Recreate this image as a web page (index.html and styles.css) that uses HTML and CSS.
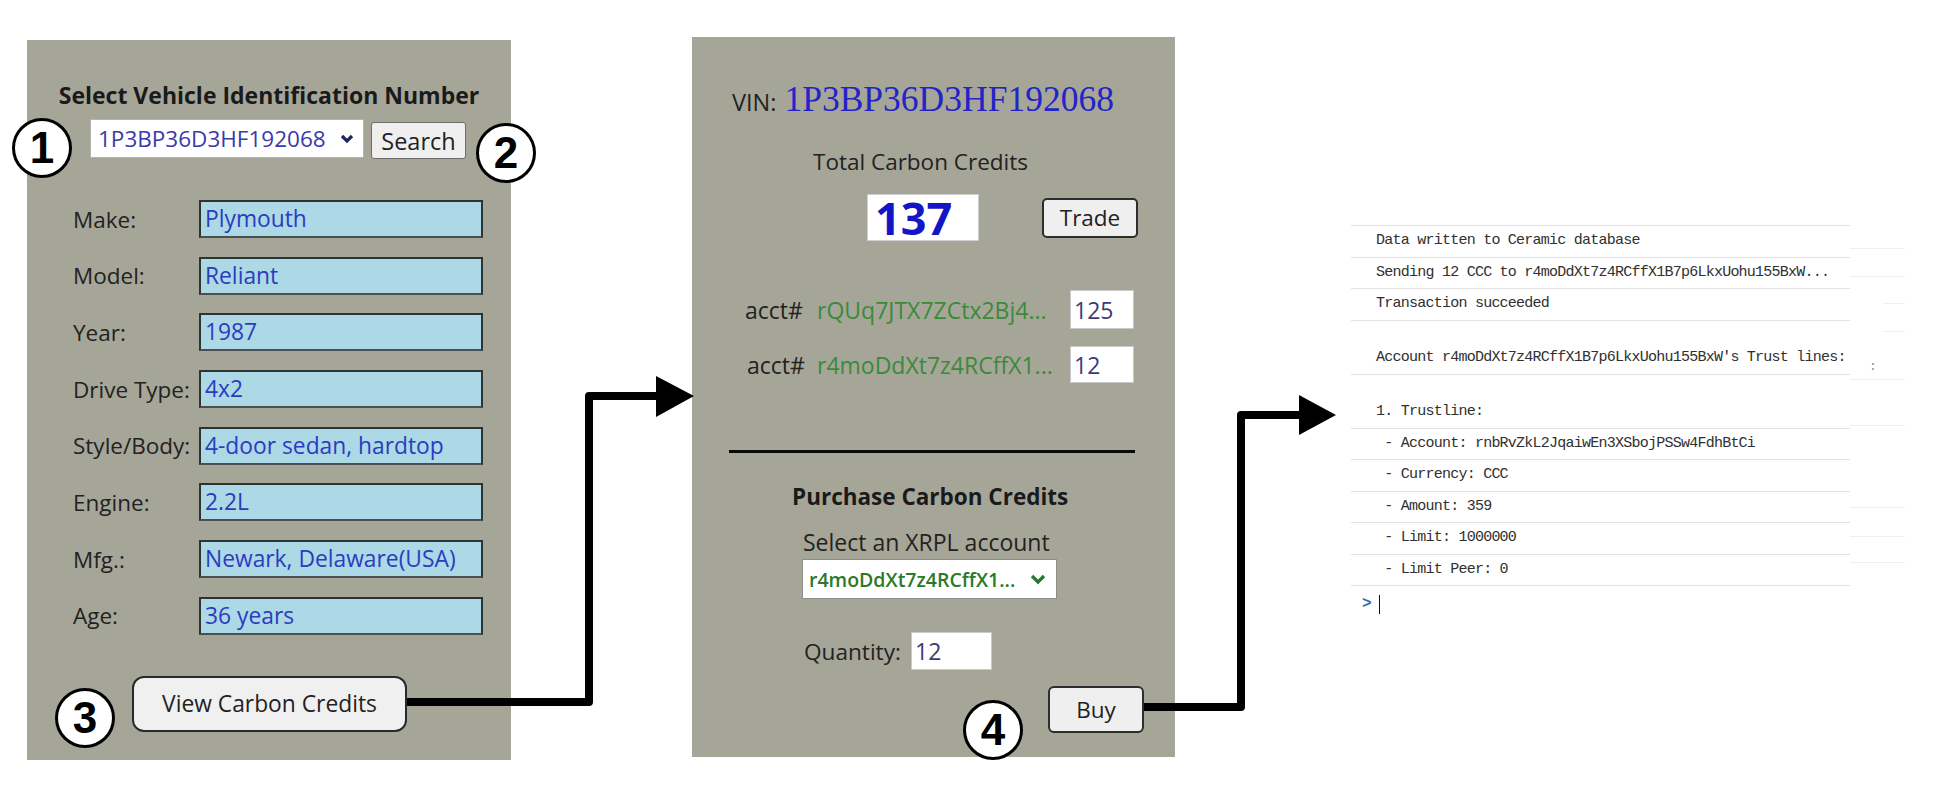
FILE: index.html
```html
<!DOCTYPE html>
<html>
<head>
<meta charset="utf-8">
<title>Carbon Credits Flow</title>
<link rel="stylesheet" href="styles.css">
</head>
<body>
<div class="page">
  <section class="panel vehicle">
    <h2 class="v-title">Select Vehicle Identification Number</h2>
    <div class="search-row">
      <div class="select vin-select">
        <span>1P3BP36D3HF192068</span>
        <svg class="chev" width="14" height="9" viewBox="0 0 14 9"><path d="M2 2 L7 7 L12 2" fill="none" stroke="#1c2560" stroke-width="3.2"/></svg>
      </div>
      <button class="btn search-btn">Search</button>
    </div>
    <div class="fields">
      <div class="field"><span class="label">Make:</span><span class="box">Plymouth</span></div>
      <div class="field"><span class="label">Model:</span><span class="box">Reliant</span></div>
      <div class="field"><span class="label">Year:</span><span class="box">1987</span></div>
      <div class="field"><span class="label">Drive Type:</span><span class="box">4x2</span></div>
      <div class="field"><span class="label">Style/Body:</span><span class="box">4-door sedan, hardtop</span></div>
      <div class="field"><span class="label">Engine:</span><span class="box">2.2L</span></div>
      <div class="field"><span class="label">Mfg.:</span><span class="box">Newark, Delaware(USA)</span></div>
      <div class="field"><span class="label">Age:</span><span class="box">36 years</span></div>
    </div>
    <button class="btn view-btn">View Carbon Credits</button>
  </section>

  <section class="panel credits">
    <div class="vin-row"><span class="vin-label">VIN:</span><span class="vin-value">1P3BP36D3HF192068</span></div>
    <div class="total-label">Total Carbon Credits</div>
    <div class="total-row">
      <div class="total-box">137</div>
      <button class="btn trade-btn">Trade</button>
    </div>
    <div class="acct-row first">
      <span class="acct-label">acct#</span>
      <span class="acct-id">rQUq7JTX7ZCtx2Bj4...</span>
      <span class="num-input">125</span>
    </div>
    <div class="acct-row second">
      <span class="acct-label">acct#</span>
      <span class="acct-id">r4moDdXt7z4RCffX1...</span>
      <span class="num-input">12</span>
    </div>
    <div class="rule"></div>
    <h3 class="purchase-title">Purchase Carbon Credits</h3>
    <div class="xrpl-label">Select an XRPL account</div>
    <div class="select xrpl-select">
      <span>r4moDdXt7z4RCffX1...</span>
      <svg class="chev" width="16" height="10" viewBox="0 0 16 10"><path d="M2 2 L8 8 L14 2" fill="none" stroke="#2a7a2a" stroke-width="3.4"/></svg>
    </div>
    <div class="qty-row">
      <span class="qty-label">Quantity:</span>
      <span class="qty-input">12</span>
    </div>
    <button class="btn buy-btn">Buy</button>
  </section>

  <section class="console">
    <div class="log">Data written to Ceramic database</div>
    <div class="log">Sending 12 CCC to r4moDdXt7z4RCffX1B7p6LkxUohu155BxW...</div>
    <div class="log">Transaction succeeded</div>
    <div class="log">&nbsp;<br>Account r4moDdXt7z4RCffX1B7p6LkxUohu155BxW's Trust lines:</div>
    <div class="log">&nbsp;<br>1. Trustline:</div>
    <div class="log"> - Account: rnbRvZkL2JqaiwEn3XSbojPSSw4FdhBtCi</div>
    <div class="log"> - Currency: CCC</div>
    <div class="log"> - Amount: 359</div>
    <div class="log"> - Limit: 1000000</div>
    <div class="log"> - Limit Peer: 0</div>
    <div class="prompt"><span class="caret">&gt;</span><span class="cursor"></span></div>
  </section>

  <div class="ghost">
    <div class="gl" style="margin-top:248px"></div>
    <div class="gl" style="margin-top:27px"></div>
    <div class="gl short" style="margin-top:26px"></div>
    <div class="gl short" style="margin-top:27px"></div>
    <div class="gdots" style="margin-top:29px">:</div>
    <div class="gl" style="margin-top:6px"></div>
    <div class="gl" style="margin-top:45px"></div>
    <div class="gl" style="margin-top:81px"></div>
    <div class="gl" style="margin-top:28px"></div>
    <div class="gl" style="margin-top:25px"></div>
  </div>

  <svg class="arrows" width="1958" height="802" viewBox="0 0 1958 802">
    <polyline points="407,702 589,702 589,396 660,396" fill="none" stroke="#000" stroke-width="8" stroke-linejoin="round"/>
    <polygon points="656,376 694,396 656,417" fill="#000"/>
    <polyline points="1144,707 1241,707 1241,415 1302,415" fill="none" stroke="#000" stroke-width="8" stroke-linejoin="round"/>
    <polygon points="1299,395 1336,415 1299,435" fill="#000"/>
  </svg>

  <div class="step s1">1</div>
  <div class="step s2">2</div>
  <div class="step s3">3</div>
  <div class="step s4">4</div>
</div>
</body>
</html>
```

FILE: styles.css
```css
* { box-sizing: border-box; }
html, body { margin: 0; padding: 0; background: #ffffff; }
body { font-family: "Open Sans", "Noto Sans", sans-serif; color: #222; }

.page {
  position: relative;
  width: 1958px;
  height: 802px;
  display: flex;
  align-items: flex-start;
  overflow: hidden;
}

.panel {
  background: #a6a698;
  display: flex;
  flex-direction: column;
  align-items: flex-start;
}

/* ---------- left panel ---------- */
.vehicle {
  margin-left: 27px;
  margin-top: 40px;
  width: 484px;
  height: 720px;
  padding-top: 41px;
}
.v-title {
  margin: 0;
  width: 100%;
  text-align: center;
  font-size: 23px;
  line-height: 28px;
  font-weight: 700;
  color: #1a1a1a;
}
.search-row {
  display: flex;
  align-items: flex-start;
  margin-top: 10px;
  margin-left: 63px;
}
.select {
  display: flex;
  align-items: center;
  justify-content: space-between;
  background: #fff;
  border: 1px solid #b5b5ad;
}
.vin-select {
  width: 274px;
  height: 39px;
  padding: 0 9px 0 7px;
  font-size: 22.5px;
  color: #3a3aa8;
}
.btn {
  font-family: "Open Sans", "Noto Sans", sans-serif;
  background: #efefef;
  color: #222;
  padding: 0;
  cursor: pointer;
}
.search-btn {
  width: 95px;
  height: 37px;
  margin-top: 3px;
  margin-left: 7px;
  font-size: 23.5px;
  border: 1px solid #6c6c6c;
  border-radius: 3px;
}
.fields {
  display: flex;
  flex-direction: column;
  gap: 18.7px;
  margin-top: 41px;
  margin-left: 46px;
}
.field {
  display: flex;
  align-items: center;
  height: 38px;
}
.label {
  width: 126px;
  font-size: 22.5px;
  color: #222;
}
.box {
  width: 284px;
  height: 38px;
  background: #add8e6;
  border: 2px solid #2e3434;
  border-bottom-color: #4a5050;
  padding-left: 4px;
  font-size: 22.8px;
  line-height: 33px;
  color: #2b3cc0;
}
.view-btn {
  margin-top: 41px;
  margin-left: 105px;
  width: 275px;
  height: 56px;
  font-size: 22.8px;
  border: 2px solid #2a2a2a;
  border-radius: 12px;
  background: #f0f0f0;
}

/* ---------- middle panel ---------- */
.credits {
  margin-left: 181px;
  margin-top: 37px;
  width: 483px;
  height: 720px;
  padding-top: 41px;
}
.vin-row {
  margin-left: 40px;
  height: 40px;
  display: flex;
  align-items: baseline;
  gap: 8px;
}
.vin-label { font-size: 23.5px; color: #222; }
.vin-value {
  font-family: "Liberation Serif", "Times New Roman", serif;
  font-size: 35.5px;
  color: #2323c8;
}
.total-label {
  margin-top: 29px;
  margin-left: 121px;
  font-size: 22.5px;
  line-height: 30px;
  color: #222;
}
.total-row {
  margin-top: 17px;
  margin-left: 175px;
  display: flex;
  align-items: center;
}
.total-box {
  width: 112px;
  height: 47px;
  background: #fff;
  border: 1px solid #cfcfcf;
  padding-left: 7px;
  font-weight: 700;
  font-size: 45px;
  line-height: 45px;
  color: #1515c8;
}
.trade-btn {
  margin-left: 63px;
  width: 96px;
  height: 40px;
  font-size: 22.5px;
  border: 2px solid #2d2d2d;
  border-radius: 5px;
}
.acct-row {
  display: flex;
  align-items: center;
  margin-left: 53px;
  font-size: 23px;
}
.acct-row.first { margin-top: 49px; height: 39px; }
.acct-row.second { margin-top: 17px; height: 37px; margin-left: 55px; }
.acct-label { width: 72px; color: #222; }
.acct-row.second .acct-label { width: 70px; }
.acct-id { width: 253px; color: #3a8a3a; }
.num-input {
  width: 64px;
  height: 100%;
  background: #fff;
  border: 1px solid #c8c8c8;
  padding-left: 3px;
  color: #3b3b78;
  display: flex;
  align-items: center;
}
.rule {
  margin-top: 67px;
  margin-left: 37px;
  width: 406px;
  height: 3px;
  background: #0a0a0a;
}
.purchase-title {
  margin: 30px 0 0 100px;
  font-size: 22.5px;
  line-height: 28px;
  font-weight: 700;
  color: #1a1a1a;
}
.xrpl-label {
  margin-top: 17px;
  margin-left: 111px;
  font-size: 23px;
  line-height: 28px;
  color: #222;
}
.xrpl-select {
  margin-top: 3px;
  margin-left: 110px;
  width: 255px;
  height: 40px;
  padding: 0 10px 0 6px;
  font-size: 19.5px;
  font-weight: 600;
  color: #2a7a2a;
  border-color: #8e8e86;
}
.qty-row {
  margin-top: 33px;
  margin-left: 112px;
  display: flex;
  align-items: center;
  height: 38px;
}
.qty-label { width: 107px; font-size: 22.6px; color: #222; }
.qty-input {
  width: 81px;
  height: 38px;
  background: #fff;
  border: 1px solid #c8c8c8;
  padding-left: 3px;
  font-size: 23px;
  color: #3b3b78;
  display: flex;
  align-items: center;
}
.buy-btn {
  margin-top: 16px;
  margin-left: 356px;
  width: 96px;
  height: 47px;
  font-size: 22.5px;
  border: 2px solid #2d2d2d;
  border-radius: 6px;
}

/* ---------- console ---------- */
.console {
  margin-left: 176px;
  margin-top: 225px;
  width: 499px;
  border-top: 1px solid #e2e2e2;
  font-family: "Liberation Mono", "DejaVu Sans Mono", monospace;
  font-size: 15px;
  letter-spacing: -0.76px;
  color: #303030;
}
.log {
  padding: 4px 0 4px 25px;
  line-height: 22.5px;
  border-bottom: 1px solid #e2e2e2;
  white-space: pre;
}
.prompt {
  display: flex;
  align-items: center;
  height: 36px;
  padding-left: 11px;
  gap: 8px;
}
.caret { color: #2f6db0; font-size: 16px; font-weight: 700; }
.cursor { width: 1px; height: 19px; background: #111; }

.ghost {
  width: 55px;
  display: flex;
  flex-direction: column;
  align-items: flex-end;
}
.gl { width: 55px; height: 1px; background: #efefef; }
.gl.short { width: 22px; }
.gdots {
  width: 36px;
  height: 12px;
  font-family: "Liberation Mono", monospace;
  font-size: 13px;
  line-height: 12px;
  color: #8a8a8a;
}

/* ---------- overlays ---------- */
.arrows {
  position: absolute;
  left: 0;
  top: 0;
  pointer-events: none;
}
.step {
  position: absolute;
  width: 60px;
  height: 60px;
  border-radius: 50%;
  border: 3px solid #000;
  background: #fff;
  display: flex;
  align-items: center;
  justify-content: center;
  font-family: "Liberation Sans", Arial, sans-serif;
  font-weight: 700;
  font-size: 44px;
  color: #000;
}
.s1 { left: 12px; top: 118px; }
.s2 { left: 476px; top: 123px; }
.s3 { left: 55px; top: 688px; }
.s4 { left: 963px; top: 700px; }
```
